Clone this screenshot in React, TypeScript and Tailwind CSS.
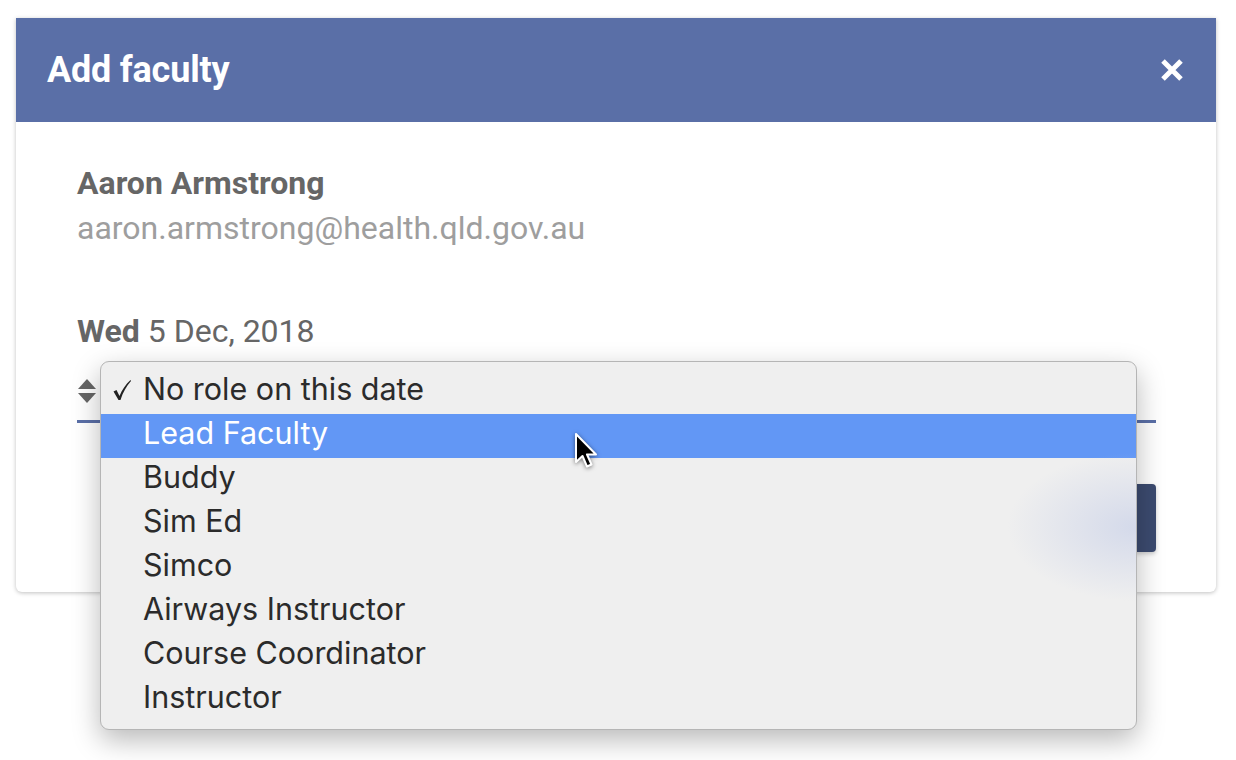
const roles = [
  "Lead Faculty",
  "Buddy",
  "Sim Ed",
  "Simco",
  "Airways Instructor",
  "Course Coordinator",
  "Instructor",
];

const SortArrows = () => (
  <svg width="20" height="26" viewBox="0 0 20 26" className="shrink-0">
    <path d="M10 1 L19 11 L1 11 Z" fill="#666" />
    <path d="M1 15 L19 15 L10 25 Z" fill="#666" />
  </svg>
);

const Tick = () => (
  <svg width="20" height="22" viewBox="0 0 20 22">
    <path d="M1.5 12.5 L4.5 11 L7.5 17 C10 11 13.5 5.5 18.5 1 L19 2 C14.5 7 11 13 8.5 21 L6.5 21 Z" fill="#222" />
  </svg>
);

const Cursor = () => (
  <svg width="26" height="38" viewBox="0 0 26 38" className="drop-shadow-[0_1px_2px_rgba(0,0,0,0.5)]">
    <path
      d="M2 2 L2 30 L8.5 24 L13 34.5 L17.5 32.5 L13 22.5 L22 22.5 Z"
      fill="#000"
      stroke="#fff"
      strokeWidth="2"
      strokeLinejoin="round"
    />
  </svg>
);

export default function App() {
  return (
    <div className="relative w-[1236px] h-[760px] bg-white overflow-hidden font-['Roboto',sans-serif]">
      <div className="pt-[18px] pl-[16px]">
        {/* modal card */}
        <div className="w-[1200px] h-[574px] bg-white rounded-b-[6px] shadow-[0_1px_4px_rgba(0,0,0,0.25)] overflow-hidden">
          <div className="h-[104px] bg-[#5a6fa7] flex items-center justify-between pl-[31px] pr-[32px]">
            <h1 className="text-white text-[36px] font-bold leading-none tracking-[-0.2px]">Add faculty</h1>
            <svg width="24" height="24" viewBox="0 0 24 24">
              <path d="M3 3 L21 21 M21 3 L3 21" stroke="#fff" strokeWidth="5" />
            </svg>
          </div>

          <div className="pl-[61px] pr-[60px] pt-[41px]">
            <p className="text-[32px] font-bold text-[#666] leading-[40px]">Aaron Armstrong</p>
            <p className="text-[32px] text-[#9e9e9e] leading-[40px] mt-[5px]">aaron.armstrong@health.qld.gov.au</p>

            <p className="text-[32px] text-[#666] leading-[40px] mt-[63px]">
              <span className="font-bold">Wed</span> 5 Dec, 2018
            </p>

            <div className="mt-[16px] h-[56px] border-b-[3px] border-[#5a6fa7] flex items-start pt-[11px]">
              <SortArrows />
            </div>

            <div className="flex justify-end mt-[61px]">
              <div className="w-[240px] h-[68px] bg-[#3c4b70] rounded-[4px] shadow-[0_2px_4px_rgba(0,0,0,0.2)]" />
            </div>
          </div>
        </div>
      </div>

      {/* native select menu */}
      <div className="absolute left-[100px] top-[361px] w-[1037px] h-[369px] bg-[#efefef] rounded-[9px] border border-[#b5b5b5] shadow-[0_10px_28px_rgba(0,0,0,0.28)] pt-[8px] font-['Inter',sans-serif] text-[#2b2b2b] overflow-hidden">
        <div className="h-[44px] flex items-center pb-[5px]">
          <span className="w-[42px] pl-[11px] flex">
            <Tick />
          </span>
          <span className="text-[30.5px] leading-none">No role on this date</span>
        </div>
        {roles.map((r, i) => (
          <div
            key={r}
            className={
              i === 0
                ? "h-[44px] flex items-center pl-[42px] pb-[5px] bg-[#6297f5] text-white"
                : "h-[44px] flex items-center pl-[42px] pb-[5px]"
            }
          >
            <span className="text-[30.5px] leading-none">{r}</span>
          </div>
        ))}

        {/* focus glow bleeding through the menu */}
        <div className="absolute right-0 top-[90px] w-[130px] h-[150px] bg-[radial-gradient(ellipse_at_right,rgba(200,208,232,0.7)_0%,rgba(239,239,239,0)_70%)]" />
      </div>

      <div className="absolute left-[574px] top-[432px]">
        <Cursor />
      </div>
    </div>
  );
}
